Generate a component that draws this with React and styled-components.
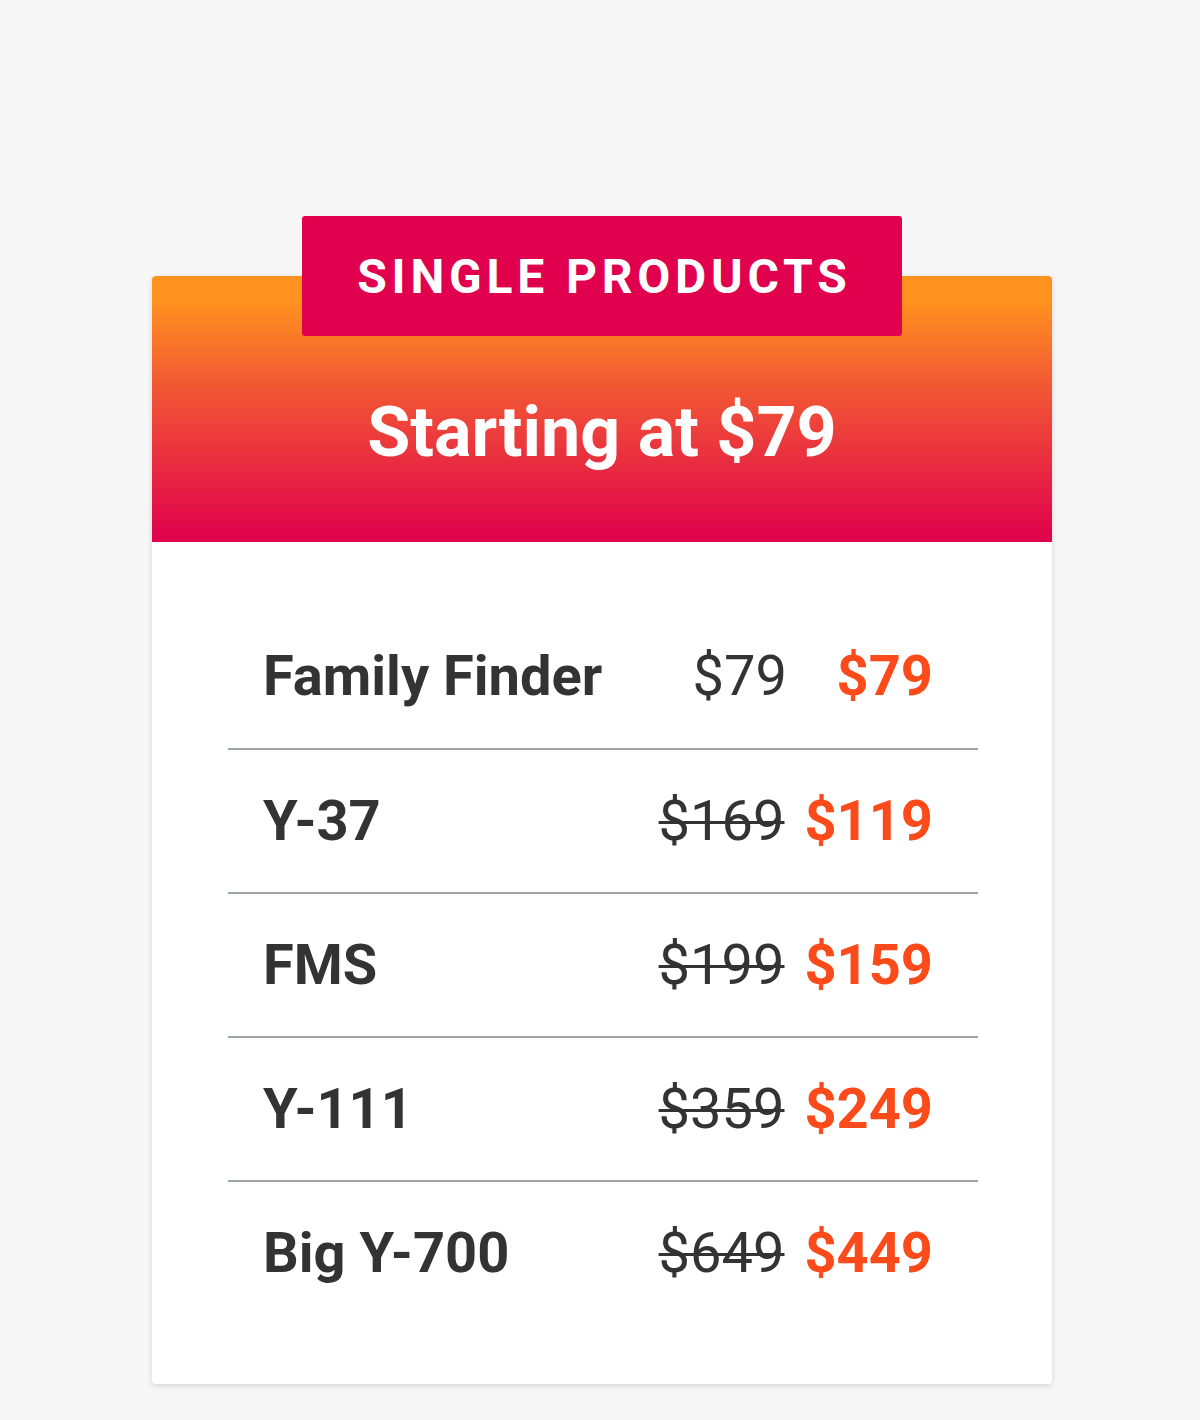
import React from 'react'
import styled, { createGlobalStyle } from 'styled-components'

const GlobalStyle = createGlobalStyle`
    html, body {
        margin: 0;
        padding: 0;
        background: #f7f7f7;
        font-family: 'Roboto', 'Liberation Sans', sans-serif;
    }
`

const Page = styled.div`
    display: flex;
    justify-content: center;
    padding: 216px 0 36px 4px;
`

const Card = styled.section`
    position: relative;
    width: 900px;
    margin-top: 60px;
    background: #fff;
    border-radius: 4px;
    box-shadow: 0 2px 6px rgba(0, 0, 0, 0.14);
`

const Badge = styled.h3`
    position: absolute;
    top: -60px;
    left: 150px;
    width: 600px;
    height: 120px;
    margin: 0;
    display: flex;
    align-items: center;
    justify-content: center;
    background: #e0004d;
    border-radius: 3px;
    color: #fff;
    font-size: 48px;
    font-weight: 700;
    letter-spacing: 0.1em;
    text-transform: uppercase;
    padding-left: 0.1em;
    box-sizing: border-box;
`

const Header = styled.header`
    height: 266px;
    padding-top: 114px;
    box-sizing: border-box;
    display: flex;
    justify-content: center;
    background: linear-gradient(to bottom, #ff911f 10%, #f25a33 40%, #e0004d 100%);
    border-radius: 4px 4px 0 0;
`

const Headline = styled.h2`
    margin: 0;
    color: #fff;
    font-size: 70px;
    font-weight: 700;
    line-height: 1.2;
`

const Table = styled.div`
    padding: 62px 74px 60px 76px;
`

const Row = styled.div`
    display: flex;
    align-items: center;
    height: 144px;
    padding: 0 45px 0 35px;
    border-top: ${p => (p.first ? 'none' : '2px solid #a0a4a8')};
    box-sizing: border-box;
`

const Name = styled.span`
    flex: 1;
    color: #333;
    font-size: 56px;
    font-weight: 700;
`

const OldPrice = styled.span`
    color: #333;
    font-size: 56px;
    font-weight: 400;
    text-decoration: ${p => (p.struck ? 'line-through' : 'none')};
    text-decoration-thickness: 3px;
`

const NewPrice = styled.span`
    min-width: 126px;
    margin-left: 20px;
    text-align: right;
    color: #fc4a1a;
    font-size: 56px;
    font-weight: 700;
`

const products = [
    { name: 'Family Finder', old: '$79', price: '$79', struck: false },
    { name: 'Y-37', old: '$169', price: '$119', struck: true },
    { name: 'FMS', old: '$199', price: '$159', struck: true },
    { name: 'Y-111', old: '$359', price: '$249', struck: true },
    { name: 'Big Y-700', old: '$649', price: '$449', struck: true },
]

const App = () => (
    <>
        <GlobalStyle />
        <Page>
            <Card>
                <Badge>Single Products</Badge>
                <Header>
                    <Headline>Starting at $79</Headline>
                </Header>
                <Table>
                    {products.map((p, i) => (
                        <Row key={p.name} first={i === 0}>
                            <Name>{p.name}</Name>
                            <OldPrice struck={p.struck}>{p.old}</OldPrice>
                            <NewPrice>{p.price}</NewPrice>
                        </Row>
                    ))}
                </Table>
            </Card>
        </Page>
    </>
)

export default App
